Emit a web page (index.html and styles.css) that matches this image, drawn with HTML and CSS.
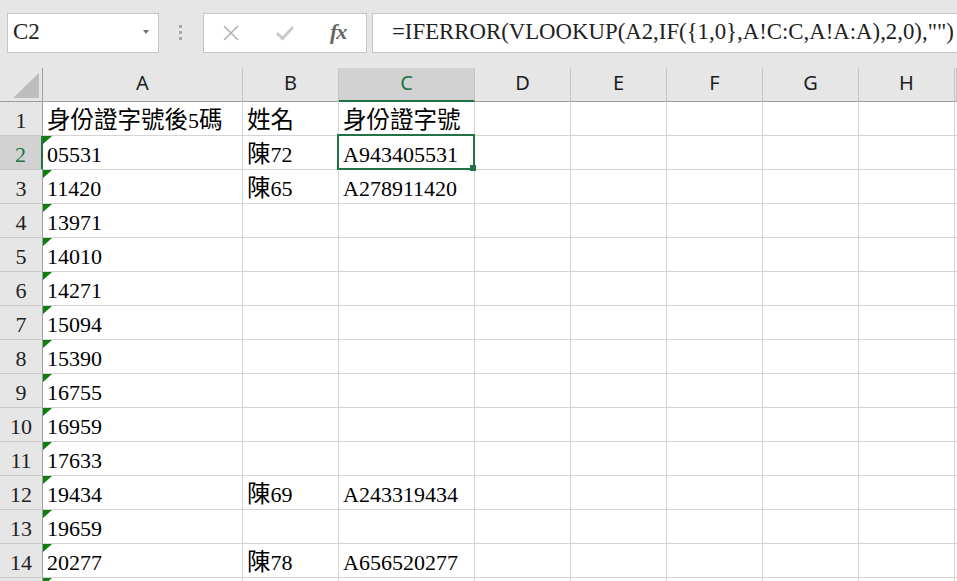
FILE: index.html
```html
<!DOCTYPE html>
<html lang="zh-TW">
<head>
    <meta charset="UTF-8">
    <title>活頁簿1 - Excel</title>
    <link rel="stylesheet" href="styles.css">
</head>
<body>
    <div class="toolbar">
        <div class="namebox"><span>C2</span><span class="caret"></span></div>
        <div class="grip"><span></span><span></span><span></span></div>
        <div class="fxbox">
            <svg class="btn-x" width="18" height="18" viewBox="0 0 18 18"><path d="M2 2 L16 16 M16 2 L2 16" stroke="#b3b3b3" stroke-width="1.6" fill="none"/></svg>
            <svg class="btn-ok" width="20" height="16" viewBox="0 0 20 16"><path d="M2 8 L7.5 13.5 L18 2" stroke="#c9c9c9" stroke-width="3" fill="none"/></svg>
            <span class="btn-fx">fx</span>
        </div>
        <div class="formula">=IFERROR(VLOOKUP(A2,IF({1,0},A!C:C,A!A:A),2,0),"")</div>
    </div>

    <div class="sheet">
        <div class="row head">
            <div class="corner"><span class="corner-tri"></span></div>
            <div>A</div><div>B</div><div class="hdr-sel">C</div><div>D</div><div>E</div><div>F</div><div>G</div><div>H</div><div></div>
        </div>
        <div class="row"><div class="rh">1</div><div><span class="zh">身份證字號後</span>5<span class="zh">碼</span></div><div><span class="zh">姓名</span></div><div><span class="zh">身份證字號</span></div><div></div><div></div><div></div><div></div><div></div><div></div></div>
        <div class="row"><div class="rh rh-sel">2</div><div class="num">05531</div><div><span class="zh">陳</span>72</div><div class="sel">A943405531</div><div></div><div></div><div></div><div></div><div></div><div></div></div>
        <div class="row"><div class="rh">3</div><div class="num">11420</div><div><span class="zh">陳</span>65</div><div>A278911420</div><div></div><div></div><div></div><div></div><div></div><div></div></div>
        <div class="row"><div class="rh">4</div><div class="num">13971</div><div></div><div></div><div></div><div></div><div></div><div></div><div></div><div></div></div>
        <div class="row"><div class="rh">5</div><div class="num">14010</div><div></div><div></div><div></div><div></div><div></div><div></div><div></div><div></div></div>
        <div class="row"><div class="rh">6</div><div class="num">14271</div><div></div><div></div><div></div><div></div><div></div><div></div><div></div><div></div></div>
        <div class="row"><div class="rh">7</div><div class="num">15094</div><div></div><div></div><div></div><div></div><div></div><div></div><div></div><div></div></div>
        <div class="row"><div class="rh">8</div><div class="num">15390</div><div></div><div></div><div></div><div></div><div></div><div></div><div></div><div></div></div>
        <div class="row"><div class="rh">9</div><div class="num">16755</div><div></div><div></div><div></div><div></div><div></div><div></div><div></div><div></div></div>
        <div class="row"><div class="rh">10</div><div class="num">16959</div><div></div><div></div><div></div><div></div><div></div><div></div><div></div><div></div></div>
        <div class="row"><div class="rh">11</div><div class="num">17633</div><div></div><div></div><div></div><div></div><div></div><div></div><div></div><div></div></div>
        <div class="row"><div class="rh">12</div><div class="num">19434</div><div><span class="zh">陳</span>69</div><div>A243319434</div><div></div><div></div><div></div><div></div><div></div><div></div></div>
        <div class="row"><div class="rh">13</div><div class="num">19659</div><div></div><div></div><div></div><div></div><div></div><div></div><div></div><div></div></div>
        <div class="row"><div class="rh">14</div><div class="num">20277</div><div><span class="zh">陳</span>78</div><div>A656520277</div><div></div><div></div><div></div><div></div><div></div><div></div></div>
        <div class="row"><div class="rh"></div><div class="num"></div><div></div><div></div><div></div><div></div><div></div><div></div><div></div><div></div></div>
    </div>
</body>
</html>
```

FILE: styles.css
```css
body {
    margin: 0;
    width: 957px;
    height: 581px;
    overflow: hidden;
    background-color: #e6e6e6;
    font-family: "Liberation Serif", "Noto Sans CJK TC", serif;
    color: #000;
}

/* formula bar */
.toolbar {
    height: 68px;
    box-sizing: border-box;
    padding: 13px 0 0 7px;
    display: flex;
    align-items: flex-start;
}
.namebox {
    width: 152px;
    height: 40px;
    box-sizing: border-box;
    background-color: #fff;
    border: 1px solid #c6c6c6;
    display: flex;
    align-items: center;
    justify-content: space-between;
    padding: 0 9px 2px 5px;
    font-family: "Liberation Serif", serif;
    font-size: 23px;
    color: #222;
}
.caret {
    width: 0;
    height: 0;
    border-left: 3.5px solid transparent;
    border-right: 3.5px solid transparent;
    border-top: 4px solid #707070;
}
.grip {
    display: flex;
    flex-direction: column;
    gap: 3px;
    margin: 12px 21px 0 20px;
}
.grip span {
    width: 3px;
    height: 3px;
    background-color: #a8a8a8;
}
.fxbox {
    width: 164px;
    height: 40px;
    box-sizing: border-box;
    background-color: #fff;
    border: 1px solid #c6c6c6;
    display: flex;
    align-items: center;
}
.btn-x {
    margin-left: 18px;
}
.btn-ok {
    margin-left: 35px;
}
.btn-fx {
    margin-left: 35px;
    font-size: 22px;
    font-style: italic;
    font-weight: bold;
    color: #666;
    letter-spacing: -1px;
    padding-bottom: 3px;
}
.formula {
    flex: 1;
    height: 40px;
    box-sizing: border-box;
    margin-left: 5px;
    background-color: #fff;
    border: 1px solid #c6c6c6;
    border-right: none;
    padding: 0 0 2px 19px;
    display: flex;
    align-items: center;
    font-size: 22.8px;
    color: #222;
    white-space: nowrap;
    overflow: hidden;
}

/* grid */
.row {
    display: grid;
    grid-template-columns: 43px 200px 96px 136px 96px 96px 96px 96px 96px 1fr;
    height: 34px;
}
.row > div {
    box-sizing: border-box;
    background-color: #fff;
    border-right: 1px solid #d4d4d4;
    border-bottom: 1px solid #d4d4d4;
    padding: 0 4px 2px 4px;
    display: flex;
    align-items: flex-end;
    font-size: 22px;
    line-height: 25px;
    white-space: nowrap;
}
.zh {
    font-size: 23.5px;
}
.row > .rh {
    background-color: #e6e6e6;
    border-right-color: #9e9e9e;
    border-bottom-color: #c8c8c8;
    justify-content: center;
    color: #222;
    padding: 0 0 2px 0;
}
.row > .rh-sel {
    background-color: #d2d2d2;
    color: #217346;
    border-right: 2px solid #217346;
}
.head > div {
    background-color: #e6e6e6;
    border-right-color: #c4c4c4;
    border-bottom-color: #9e9e9e;
    font-family: "Noto Sans", sans-serif;
    font-size: 20px;
    color: #1e1e1e;
    align-items: center;
    justify-content: center;
    padding: 0 0 4px 0;
}
.head > .corner {
    border-right-color: #9e9e9e;
    align-items: flex-end;
    justify-content: flex-end;
    padding: 0 3px 3px 0;
}
.corner-tri {
    width: 0;
    height: 0;
    border-left: 26px solid transparent;
    border-bottom: 25px solid #bdbdbd;
}
.head > .hdr-sel {
    background-color: #d2d2d2;
    color: #217346;
    border-bottom: 2px solid #217346;
}

/* number stored as text marker */
.num {
    position: relative;
}
.num::before {
    content: "";
    position: absolute;
    top: 0;
    left: 0;
    border-top: 8px solid #0e7d0e;
    border-right: 9px solid transparent;
}

/* active cell */
.sel {
    position: relative;
    z-index: 2;
}
.sel::after {
    content: "";
    position: absolute;
    left: -2px;
    top: -2px;
    right: -1px;
    bottom: -1px;
    border: 2px solid #217346;
}
.sel::before {
    content: "";
    position: absolute;
    right: -2px;
    bottom: -2px;
    width: 6px;
    height: 6px;
    background-color: #217346;
    z-index: 1;
}
```
